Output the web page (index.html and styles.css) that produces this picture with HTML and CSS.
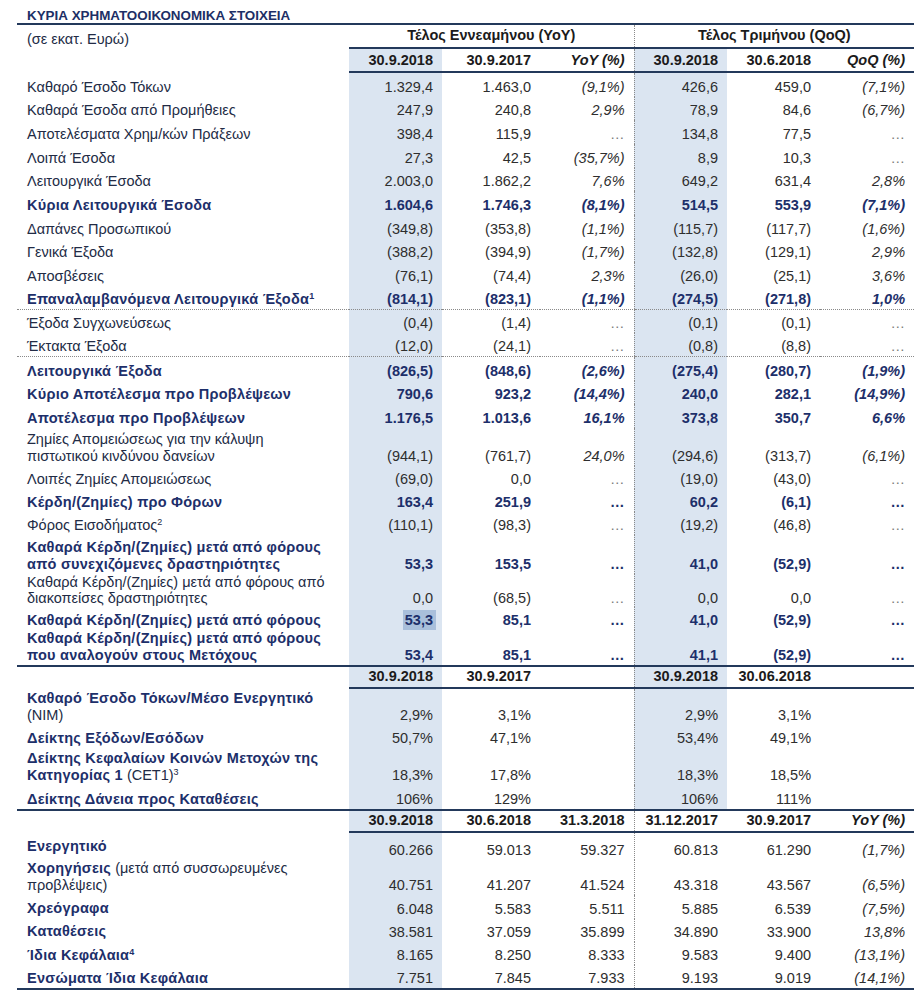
FILE: index.html
```html
<!DOCTYPE html>
<html lang="el">
<head>
<meta charset="utf-8">
<title>Κύρια Χρηματοοικονομικά Στοιχεία</title>
<link rel="stylesheet" href="styles.css">
</head>
<body>
<div class="sheet">
  <div class="title">ΚΥΡΙΑ ΧΡΗΜΑΤΟΟΙΚΟΝΟΜΙΚΑ ΣΤΟΙΧΕΙΑ</div>
  <table class="fin">
    <colgroup>
      <col class="w-l"><col class="w-1"><col class="w-2"><col class="w-3"><col class="w-4"><col class="w-5"><col class="w-6">
    </colgroup>
    <tbody>
      <tr class="h-top">
        <td class="l unit">(σε εκατ. Ευρώ)</td>
        <td class="grp" colspan="3">Τέλος Εννεαμήνου (YoY)</td>
        <td class="grp c4" colspan="3">Τέλος Τριμήνου (QoQ)</td>
      </tr>
      <tr class="h-dates">
        <td class="l"></td>
        <td class="sh">30.9.2018</td><td>30.9.2017</td><td class="pct">YoY (%)</td>
        <td class="sh c4">30.9.2018</td><td>30.6.2018</td><td class="pct">QoQ (%)</td>
      </tr>

      <tr><td class="l">Καθαρό Έσοδο Τόκων</td><td class="sh">1.329,4</td><td>1.463,0</td><td class="pct">(9,1%)</td><td class="sh c4">426,6</td><td>459,0</td><td class="pct">(7,1%)</td></tr>
      <tr><td class="l">Καθαρά Έσοδα από Προμήθειες</td><td class="sh">247,9</td><td>240,8</td><td class="pct">2,9%</td><td class="sh c4">78,9</td><td>84,6</td><td class="pct">(6,7%)</td></tr>
      <tr><td class="l">Αποτελέσματα Χρημ/κών Πράξεων</td><td class="sh">398,4</td><td>115,9</td><td class="na">…</td><td class="sh c4">134,8</td><td>77,5</td><td class="na">…</td></tr>
      <tr><td class="l">Λοιπά Έσοδα</td><td class="sh">27,3</td><td>42,5</td><td class="pct">(35,7%)</td><td class="sh c4">8,9</td><td>10,3</td><td class="na">…</td></tr>
      <tr><td class="l">Λειτουργικά Έσοδα</td><td class="sh">2.003,0</td><td>1.862,2</td><td class="pct">7,6%</td><td class="sh c4">649,2</td><td>631,4</td><td class="pct">2,8%</td></tr>
      <tr class="b"><td class="l">Κύρια Λειτουργικά Έσοδα</td><td class="sh">1.604,6</td><td>1.746,3</td><td class="pct">(8,1%)</td><td class="sh c4">514,5</td><td>553,9</td><td class="pct">(7,1%)</td></tr>
      <tr><td class="l">Δαπάνες Προσωπικού</td><td class="sh">(349,8)</td><td>(353,8)</td><td class="pct">(1,1%)</td><td class="sh c4">(115,7)</td><td>(117,7)</td><td class="pct">(1,6%)</td></tr>
      <tr><td class="l">Γενικά Έξοδα</td><td class="sh">(388,2)</td><td>(394,9)</td><td class="pct">(1,7%)</td><td class="sh c4">(132,8)</td><td>(129,1)</td><td class="pct">2,9%</td></tr>
      <tr><td class="l">Αποσβέσεις</td><td class="sh">(76,1)</td><td>(74,4)</td><td class="pct">2,3%</td><td class="sh c4">(26,0)</td><td>(25,1)</td><td class="pct">3,6%</td></tr>
      <tr class="b dot"><td class="l">Επαναλαμβανόμενα Λειτουργικά Έξοδα<sup>1</sup></td><td class="sh">(814,1)</td><td>(823,1)</td><td class="pct">(1,1%)</td><td class="sh c4">(274,5)</td><td>(271,8)</td><td class="pct">1,0%</td></tr>
      <tr><td class="l">Έξοδα Συγχωνεύσεως</td><td class="sh">(0,4)</td><td>(1,4)</td><td class="na">…</td><td class="sh c4">(0,1)</td><td>(0,1)</td><td class="na">…</td></tr>
      <tr class="dot"><td class="l">Έκτακτα Έξοδα</td><td class="sh">(12,0)</td><td>(24,1)</td><td class="na">…</td><td class="sh c4">(0,8)</td><td>(8,8)</td><td class="na">…</td></tr>
      <tr class="b"><td class="l">Λειτουργικά Έξοδα</td><td class="sh">(826,5)</td><td>(848,6)</td><td class="pct">(2,6%)</td><td class="sh c4">(275,4)</td><td>(280,7)</td><td class="pct">(1,9%)</td></tr>
      <tr class="b"><td class="l">Κύριο Αποτέλεσμα προ Προβλέψεων</td><td class="sh">790,6</td><td>923,2</td><td class="pct">(14,4%)</td><td class="sh c4">240,0</td><td>282,1</td><td class="pct">(14,9%)</td></tr>
      <tr class="b"><td class="l">Αποτέλεσμα προ Προβλέψεων</td><td class="sh">1.176,5</td><td>1.013,6</td><td class="pct">16,1%</td><td class="sh c4">373,8</td><td>350,7</td><td class="pct">6,6%</td></tr>
      <tr class="two r16"><td class="l">Ζημίες Απομειώσεως για την κάλυψη<br>πιστωτικού κινδύνου δανείων</td><td class="sh">(944,1)</td><td>(761,7)</td><td class="pct">24,0%</td><td class="sh c4">(294,6)</td><td>(313,7)</td><td class="pct">(6,1%)</td></tr>
      <tr class="t"><td class="l">Λοιπές Ζημίες Απομειώσεως</td><td class="sh">(69,0)</td><td>0,0</td><td class="na">…</td><td class="sh c4">(19,0)</td><td>(43,0)</td><td class="na">…</td></tr>
      <tr class="b t"><td class="l">Κέρδη/(Ζημίες) προ Φόρων</td><td class="sh">163,4</td><td>251,9</td><td class="na">…</td><td class="sh c4">60,2</td><td>(6,1)</td><td class="na">…</td></tr>
      <tr class="t"><td class="l">Φόρος Εισοδήματος<sup>2</sup></td><td class="sh">(110,1)</td><td>(98,3)</td><td class="na">…</td><td class="sh c4">(19,2)</td><td>(46,8)</td><td class="na">…</td></tr>
      <tr class="b two r20"><td class="l">Καθαρά Κέρδη/(Ζημίες) μετά από φόρους<br>από συνεχιζόμενες δραστηριότητες</td><td class="sh">53,3</td><td>153,5</td><td class="na">…</td><td class="sh c4">41,0</td><td>(52,9)</td><td class="na">…</td></tr>
      <tr class="two r21"><td class="l">Καθαρά Κέρδη/(Ζημίες) μετά από φόρους από<br>διακοπείσες δραστηριότητες</td><td class="sh">0,0</td><td>(68,5)</td><td class="na">…</td><td class="sh c4">0,0</td><td>0,0</td><td class="na">…</td></tr>
      <tr class="b t"><td class="l">Καθαρά Κέρδη/(Ζημίες) μετά από φόρους</td><td class="sh"><span class="sel">53,3</span></td><td>85,1</td><td class="na">…</td><td class="sh c4">41,0</td><td>(52,9)</td><td class="na">…</td></tr>
      <tr class="b two r23"><td class="l">Καθαρά Κέρδη/(Ζημίες) μετά από φόρους<br>που αναλογούν στους Μετόχους</td><td class="sh">53,4</td><td>85,1</td><td class="na">…</td><td class="sh c4">41,1</td><td>(52,9)</td><td class="na">…</td></tr>

      <tr class="h-sec">
        <td class="l"></td>
        <td class="sh">30.9.2018</td><td>30.9.2017</td><td></td>
        <td class="sh c4">30.9.2018</td><td>30.06.2018</td><td></td>
      </tr>
      <tr class="two r2"><td class="l"><b>Καθαρό Έσοδο Τόκων/Μέσο Ενεργητικό</b><br>(NIM)</td><td class="sh">2,9%</td><td>3,1%</td><td></td><td class="sh c4">2,9%</td><td>3,1%</td><td></td></tr>
      <tr class="r2 t"><td class="l"><b>Δείκτης Εξόδων/Εσόδων</b></td><td class="sh">50,7%</td><td>47,1%</td><td></td><td class="sh c4">53,4%</td><td>49,1%</td><td></td></tr>
      <tr class="two r2"><td class="l"><b>Δείκτης Κεφαλαίων Κοινών Μετοχών της<br>Κατηγορίας 1</b> (CET1)<sup>3</sup></td><td class="sh">18,3%</td><td>17,8%</td><td></td><td class="sh c4">18,3%</td><td>18,5%</td><td></td></tr>
      <tr class="r2"><td class="l"><b>Δείκτης Δάνεια προς Καταθέσεις</b></td><td class="sh">106%</td><td>129%</td><td></td><td class="sh c4">106%</td><td>111%</td><td></td></tr>

      <tr class="h-sec">
        <td class="l"></td>
        <td class="sh">30.9.2018</td><td>30.6.2018</td><td>31.3.2018</td>
        <td class="c4">31.12.2017</td><td>30.9.2017</td><td class="pct">YoY (%)</td>
      </tr>
      <tr class="r3 first"><td class="l"><b>Ενεργητικό</b></td><td class="sh">60.266</td><td>59.013</td><td>59.327</td><td class="c4">60.813</td><td>61.290</td><td class="pct">(1,7%)</td></tr>
      <tr class="r3 two"><td class="l"><b>Χορηγήσεις</b> (μετά από συσσωρευμένες<br>προβλέψεις)</td><td class="sh">40.751</td><td>41.207</td><td>41.524</td><td class="c4">43.318</td><td>43.567</td><td class="pct">(6,5%)</td></tr>
      <tr class="r3"><td class="l"><b>Χρεόγραφα</b></td><td class="sh">6.048</td><td>5.583</td><td>5.511</td><td class="c4">5.885</td><td>6.539</td><td class="pct">(7,5%)</td></tr>
      <tr class="r3"><td class="l"><b>Καταθέσεις</b></td><td class="sh">38.581</td><td>37.059</td><td>35.899</td><td class="c4">34.890</td><td>33.900</td><td class="pct">13,8%</td></tr>
      <tr class="r3 t"><td class="l"><b>Ίδια Κεφάλαια<sup>4</sup></b></td><td class="sh">8.165</td><td>8.250</td><td>8.333</td><td class="c4">9.583</td><td>9.400</td><td class="pct">(13,1%)</td></tr>
      <tr class="r3 t last"><td class="l"><b>Ενσώματα Ίδια Κεφάλαια</b></td><td class="sh">7.751</td><td>7.845</td><td>7.933</td><td class="c4">9.193</td><td>9.019</td><td class="pct">(14,1%)</td></tr>
    </tbody>
  </table>
</div>
</body>
</html>
```

FILE: styles.css
```css
html, body {
  margin: 0;
  padding: 0;
  background: #ffffff;
}

body {
  font-family: "Liberation Sans", Arial, "DejaVu Sans", sans-serif;
  font-size: 14.5px;
  color: #2b2b2b;
}

.sheet {
  margin-left: 17px;
  width: 897px;
}

.title {
  padding: 9px 0 0 10px;
  height: 14px;
  font-size: 13.4px;
  line-height: 14px;
  font-weight: bold;
  color: #1d2f66;
}

.fin {
  border-collapse: collapse;
  table-layout: fixed;
  width: 897px;
}

.w-l { width: 332px; }
.w-1 { width: 93px; }
.w-2 { width: 98px; }
.w-3 { width: 94px; }
.w-4 { width: 93px; }
.w-5 { width: 93px; }
.w-6 { width: 94px; }

.fin td {
  padding: 0 9px 1px 9px;
  line-height: 17px;
  height: 22.67px;
  vertical-align: bottom;
  text-align: right;
  white-space: nowrap;
  color: #2e2e2e;
}

.fin td.l {
  text-align: left;
  padding-left: 10px;
  color: #222b45;
}

.fin tr.t td {
  height: 22px;
}

.fin tr.two td {
  height: 35.5px;
}

.fin tr.r16 td {
  height: 37px;
}

.fin tr.r20 td {
  height: 38px;
}

.fin tr.r21 td {
  height: 32px;
  line-height: 16px;
}

.fin tr.r23 td {
  height: 34px;
}

.fin tr.dot td {
  height: 21.67px;
  border-bottom: 1px dotted #8a8a8a;
}

.fin td.sh {
  background: #dbe5f1;
}

.fin td.c4 {
  border-left: 1px dotted #8a8a8a;
}

.fin td.pct {
  font-style: italic;
}

.fin td.na {
  color: #7a7a7a;
}

/* bold (key) rows */
.fin tr.b td {
  font-weight: bold;
  color: #1d2f6a;
}

.fin tr.b td.l,
.fin b {
  letter-spacing: 0.25px;
}

.fin tr.b td.na {
  color: #1d2f6a;
}

.fin b {
  font-weight: bold;
  color: #1d2f6a;
}

sup {
  font-size: 9px;
  line-height: 0;
  vertical-align: 5px;
}

.sel {
  background: #a9bfdb;
  padding: 2px 3px 2px 2px;
  margin-right: -3px;
}

/* header rows */
.fin .h-top td {
  border-top: 2px solid #23395b;
  height: 21px;
  font-weight: bold;
  color: #1b1b1b;
}

.fin .h-top td.unit {
  font-weight: normal;
  color: #222b45;
  padding-bottom: 0;
}

.fin .h-top td.grp {
  text-align: center;
  vertical-align: middle;
  border-bottom: 2px solid #23395b;
}

.fin .h-dates td,
.fin .h-sec td {
  font-weight: bold;
  color: #1b1b1b;
  height: 22px;
  vertical-align: middle;
  padding-bottom: 0;
}

.fin .h-sec td {
  height: 20px;
  border-top: 2px solid #23395b;
}

.fin .h-dates td:not(.l),
.fin .h-sec td:not(.l) {
  border-bottom: 2px solid #23395b;
}

.fin tr.r3.first td {
  height: 26.5px;
}

.fin tr.r3.two td {
  height: 33.5px;
}

.fin tr.r3.last td {
  height: 21px;
}

.fin tr.r3 td.l {
  vertical-align: top;
  padding-top: 4.5px;
  height: 17px;
}

.fin tr.r3.first td.l {
  padding-top: 6.5px;
  height: 17px;
}

.fin tr.r3.t td.l {
  height: 17px;
}

.fin tr.r3.two td.l {
  vertical-align: bottom;
  padding-top: 0;
  height: 34px;
}

.fin tr.last td {
  border-bottom: 2px solid #23395b;
}
```
